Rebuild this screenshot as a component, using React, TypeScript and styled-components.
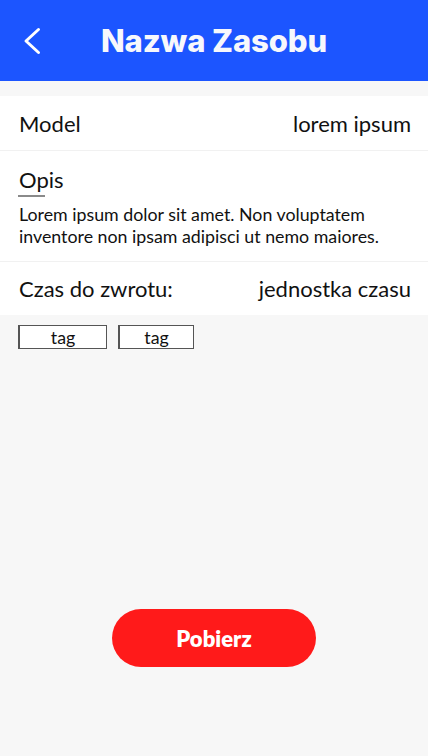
import React from "react";
import styled, { createGlobalStyle } from "styled-components";

const GlobalStyle = createGlobalStyle`
  html, body { margin: 0; padding: 0; background: #f7f7f7; }
  * { box-sizing: border-box; }
  body { font-family: "Lato", "Noto Sans", sans-serif; color: #111; }
`;

const Page = styled.div`
  min-height: 100vh;
  display: flex;
  flex-direction: column;
  background: #f7f7f7;
`;

const Header = styled.header`
  height: 81px;
  background: #1c55ff;
  display: flex;
  align-items: center;
  justify-content: center;
  position: relative;
`;

const BackButton = styled.button`
  position: absolute;
  left: 22px;
  top: 26px;
  width: 20px;
  height: 30px;
  border: none;
  background: transparent;
  padding: 0;
  display: block;
  cursor: pointer;
  svg { display: block; }
`;

const Title = styled.h1`
  margin: 0;
  color: #f7f8fc;
  font-family: "Inter", "Open Sans", sans-serif;
  font-weight: 800;
  font-size: 31px;
  letter-spacing: -0.1px;
`;

const Panel = styled.section`
  margin-top: 15px;
  background: #fff;
`;

const Row = styled.div<{ $height: number }>`
  height: ${(p) => p.$height}px;
  padding: 0 17px 0 19px;
  display: flex;
  align-items: center;
  justify-content: space-between;
  font-size: 22px;
  border-bottom: 1px solid #f1f1f1;
  &:last-child { border-bottom: none; }
`;

const Desc = styled.div`
  padding: 15px 19px 14px 19px;
  border-bottom: 1px solid #f1f1f1;
`;

const DescTitle = styled.div`
  font-size: 22px;
  line-height: 27px;
  display: inline-block;
  position: relative;
  &::after {
    content: "";
    position: absolute;
    left: -1px;
    bottom: -4px;
    width: 27px;
    height: 2px;
    background: #8a8a8a;
  }
`;

const DescText = styled.p`
  margin: 10px 0 0;
  font-size: 17.8px;
  line-height: 22px;
`;

const Tags = styled.div`
  display: flex;
  gap: 11px;
  padding: 10px 18px 0;
`;

const Tag = styled.span<{ $width: number }>`
  width: ${(p) => p.$width}px;
  height: 24px;
  border: 1px solid #555;
  border-left-width: 2px;
  display: flex;
  align-items: center;
  justify-content: center;
  font-size: 17.8px;
  background: #fff;
`;

const Footer = styled.div`
  margin-top: auto;
  padding-bottom: 89px;
  display: flex;
  justify-content: center;
`;

const Primary = styled.button`
  width: 204px;
  height: 58px;
  border: none;
  border-radius: 29px;
  background: #ff1a1a;
  color: #fff;
  font-family: "Lato", sans-serif;
  font-weight: 800;
  font-size: 22px;
  cursor: pointer;
`;

export default function App() {
  return (
    <>
      <GlobalStyle />
      <Page>
        <Header>
          <BackButton aria-label="Wróć">
            <svg width="20" height="30" viewBox="0 0 20 30" fill="none">
              <path d="M16.5 3.5 L4 15 L16.5 26.5" stroke="#fff" strokeWidth="3" strokeLinecap="round" strokeLinejoin="round" />
            </svg>
          </BackButton>
          <Title>Nazwa Zasobu</Title>
        </Header>
        <Panel>
          <Row $height={55}>
            <span>Model</span>
            <span>lorem ipsum</span>
          </Row>
          <Desc>
            <DescTitle>Opis</DescTitle>
            <DescText>
              Lorem ipsum dolor sit amet. Non voluptatem inventore non ipsam adipisci ut nemo maiores.
            </DescText>
          </Desc>
          <Row $height={53}>
            <span>Czas do zwrotu:</span>
            <span>jednostka czasu</span>
          </Row>
        </Panel>
        <Tags>
          <Tag $width={89}>tag</Tag>
          <Tag $width={76}>tag</Tag>
        </Tags>
        <Footer>
          <Primary>Pobierz</Primary>
        </Footer>
      </Page>
    </>
  );
}
